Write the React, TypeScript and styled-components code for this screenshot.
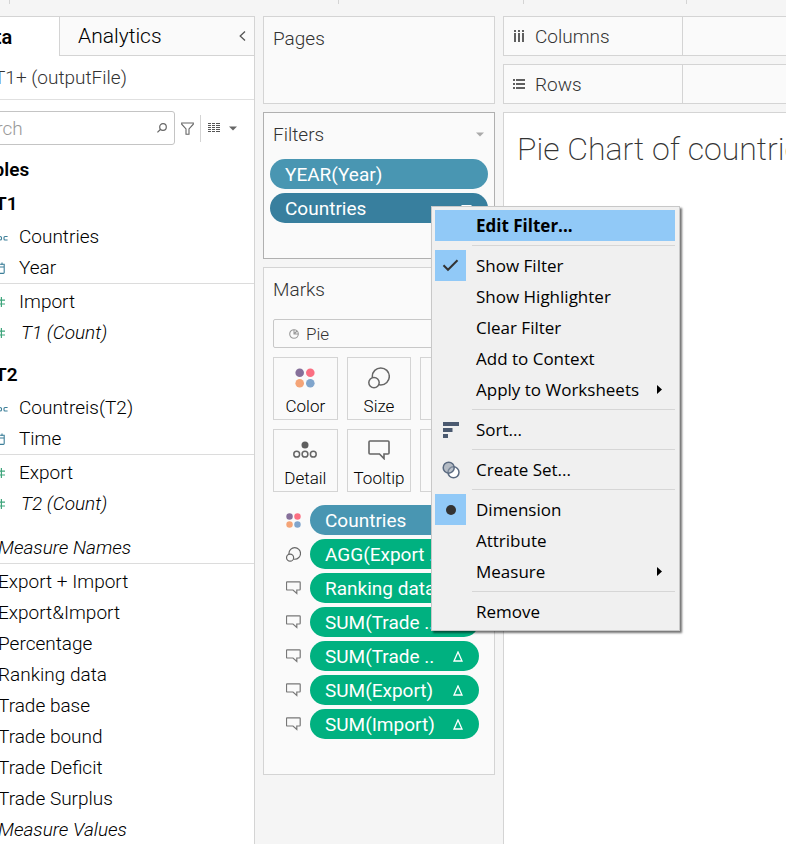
import React from "react";
import styled, { createGlobalStyle, css } from "styled-components";

const ui = `Roboto, "Liberation Sans", sans-serif`;
const menuFont = `"Open Sans", "Noto Sans", sans-serif`;

const line = "#d4d4d4";

const GlobalStyle = createGlobalStyle`
  * { box-sizing: border-box; }
  body {
    margin: 0;
    background: #f5f5f5;
    font-family: ${ui};
    font-weight: 300;
    font-size: 19px;
    color: #333;
    overflow: hidden;
  }
  button, input, select {
    font: inherit;
    color: inherit;
    margin: 0;
    padding: 0;
    border: 0;
    background: none;
    text-align: left;
  }
  h1, h2, h3, p, ul { margin: 0; padding: 0; font: inherit; list-style: none; }
`;

const Page = styled.div`
  display: flex;
  flex-direction: column;
  height: 100vh;
  overflow: hidden;
`;

const Toolbar = styled.header`
  display: flex;
  flex: none;
  height: 16px;
`;

const ToolGroup = styled.div<{ $width: number }>`
  width: ${(p) => p.$width}px;
  height: 4px;
  border-right: 1px solid ${line};
`;

const Workspace = styled.div`
  display: flex;
  flex: 1;
  min-height: 0;
  gap: 8px;
`;

/* ---------- data pane ---------- */

const DataPane = styled.aside`
  flex: none;
  width: 297px;
  margin-left: -42px;
  background: #fff;
  border: 1px solid ${line};
  border-bottom: 0;
  color: #000;
`;

const Tabs = styled.div`
  display: flex;
  height: 39px;
`;

const Tab = styled.button<{ $active?: boolean }>`
  font-size: 20px;
  ${(p) =>
    p.$active
      ? css`
          width: 100px;
          padding-left: 12px;
          font-weight: 600;
        `
      : css`
          flex: 1;
          display: flex;
          align-items: center;
          justify-content: space-between;
          padding: 0 8px 0 18px;
          background: #fafafa;
          border-left: 1px solid ${line};
          border-bottom: 1px solid ${line};
          font-size: 21px;
        `}
`;

const Source = styled.div`
  height: 44px;
  padding-left: 35px;
  line-height: 44px;
  color: #333;
  border-bottom: 1px solid #e0e0e0;
`;

const SearchRow = styled.div`
  display: flex;
  align-items: center;
  padding: 11px 17px 0 5px;
  margin-bottom: 8px;
  height: 45px;
`;

const SearchBox = styled.label`
  display: flex;
  align-items: center;
  flex: 1;
  min-width: 0;
  height: 34px;
  padding: 0 7px 0 0;
  border: 1px solid #c4c4c4;
  border-radius: 3px;
`;

const SearchInput = styled.input`
  flex: 1;
  width: 0;
  min-width: 0;
  outline: 0;
  &::placeholder {
    color: #999;
    opacity: 1;
  }
`;

const IconButton = styled.button`
  display: flex;
  flex: none;
  align-items: center;
  margin-left: 6px;
`;

const ViewButton = styled(IconButton)`
  height: 27px;
  gap: 9px;
  padding-left: 7px;
  border-left: 1px solid ${line};
`;

const Heading = styled.h2<{ $indent?: boolean }>`
  height: 34px;
  line-height: 34px;
  padding-left: ${(p) => (p.$indent ? 36 : 14)}px;
  font-weight: 600;
`;

const Group = styled.ul<{ $ruled?: boolean; $gap?: number }>`
  margin-bottom: ${(p) => p.$gap ?? 0}px;
  ${(p) =>
    p.$ruled &&
    css`
      margin-bottom: 2px;
      border-bottom: 1px solid #dcdcdc;
    `}
`;

const FieldButton = styled.button<{ $italic?: boolean; $flush?: boolean }>`
  display: flex;
  align-items: center;
  width: 100%;
  height: 31px;
  padding-left: ${(p) => (p.$flush ? 39 : 30)}px;
  font-style: ${(p) => (p.$italic ? "italic" : "normal")};
  white-space: nowrap;
`;

const FieldIcon = styled.span<{ $wide?: boolean }>`
  display: flex;
  width: ${(p) => (p.$wide ? 32 : 30)}px;
`;

/* ---------- shelves ---------- */

const Cards = styled.div`
  display: flex;
  flex-direction: column;
  flex: none;
  gap: 8px;
  width: 232px;
`;

const Card = styled.section<{ $height: number; $active?: boolean; $pad?: number }>`
  min-height: ${(p) => p.$height}px;
  padding: 0 ${(p) => p.$pad ?? 6}px;
  background: #fafafa;
  border: 1px solid ${(p) => (p.$active ? "#b0b0b0" : line)};
`;

const CardTitle = styled.h2<{ $inset: number }>`
  display: flex;
  align-items: center;
  justify-content: space-between;
  height: 42px;
  margin-bottom: 4px;
  padding: 0 4px 0 ${(p) => p.$inset}px;
`;

const Pills = styled.ul`
  display: flex;
  flex-direction: column;
  gap: 4px;
`;

const PillRow = styled.li`
  position: relative;
  display: flex;
  align-items: center;
`;

const PillIcon = styled.span`
  display: flex;
  width: 37px;
  padding-left: 13px;
`;

type PillTone = "blue" | "active" | "green";
const tones: Record<PillTone, string> = {
  blue: "#4996b2",
  active: "#387f9e",
  green: "#00b180",
};

const Pill = styled.button<{ $tone: PillTone }>`
  display: flex;
  align-items: center;
  justify-content: space-between;
  flex: 1;
  height: 30px;
  padding: 0 16px 0 15px;
  border-radius: 15px;
  background: ${(p) => tones[p.$tone]};
  color: #fff;
  font-weight: 400;
  white-space: nowrap;
`;

const MarkType = styled.label`
  display: flex;
  align-items: center;
  gap: 7px;
  height: 29px;
  margin: 9px 0;
  padding-left: 15px;
  border: 1px solid #c8c8c8;
  border-radius: 2px;
  font-size: 17px;
`;

const MarkSelect = styled.select`
  flex: 1;
  appearance: none;
  outline: 0;
`;

const MarkGrid = styled.div`
  display: grid;
  grid-template-columns: repeat(3, 1fr);
  gap: 9px;
  margin-bottom: 13px;
`;

const MarkButton = styled.button`
  display: flex;
  flex-direction: column;
  align-items: center;
  height: 63px;
  padding-top: 4px;
  border: 1px solid ${line};
  color: #000;
  font-size: 17px;
  line-height: 26px;
`;

const MarkIcon = styled.span`
  display: flex;
  align-items: center;
  height: 32px;
`;

const Encodings = styled.div`
  width: 206px;
`;

/* ---------- sheet ---------- */

const Main = styled.main`
  display: flex;
  flex-direction: column;
  flex: 1;
  min-width: 0;
  gap: 8px;
`;

const Shelf = styled.div`
  display: flex;
  flex: none;
  height: 40px;
  background: #fafafa;
  border: 1px solid ${line};
  border-right: 0;
`;

const ShelfLabel = styled.h2`
  display: flex;
  align-items: center;
  gap: 10px;
  width: 179px;
  padding-left: 9px;
  border-right: 1px solid ${line};
`;

const Sheet = styled.div`
  flex: 1;
  padding: 15px 0 0 13px;
  background: #fff;
  border: 1px solid ${line};
  border-width: 1px 0 0 1px;
  overflow: hidden;
`;

const SheetTitle = styled.h1`
  font-size: 32px;
  line-height: 42px;
  font-weight: 200;
  white-space: nowrap;
`;

/* ---------- context menu ---------- */

const Menu = styled.div`
  position: absolute;
  left: 161px;
  top: 13px;
  z-index: 2;
  width: 249px;
  padding: 3px 4px 3px 3px;
  background: #f0f0f0;
  border: 1px solid #c8c8c8;
  box-shadow: 2px 2px 2px rgba(0, 0, 0, 0.55);
  font-family: ${menuFont};
  font-weight: 400;
  font-size: 17px;
  color: #000;
`;

const MenuItem = styled.button<{ $hot?: boolean }>`
  display: flex;
  align-items: center;
  width: 100%;
  height: 31px;
  padding-right: 13px;
  background: ${(p) => (p.$hot ? "#91c9f7" : "transparent")};
  font-weight: ${(p) => (p.$hot ? 700 : 400)};
  white-space: nowrap;
`;

const MenuIcon = styled.span<{ $on?: boolean }>`
  display: flex;
  align-items: center;
  justify-content: center;
  width: 31px;
  height: 31px;
  margin-right: 10px;
  background: ${(p) => (p.$on ? "#91c9f7" : "transparent")};
`;

const MenuText = styled.span`
  flex: 1;
`;

const Separator = styled.hr`
  height: 1px;
  margin: 4px 0 4px 37px;
  border: 0;
  background: #d6d6d6;
`;

/* ---------- drawings ---------- */

const Caret = ({ color = "#666" }: { color?: string }) => (
  <svg width="8" height="5" viewBox="0 0 8 5">
    <path d="M0 0.5h8L4 4.5z" fill={color} />
  </svg>
);

const PillCaret = () => (
  <svg width="11" height="6" viewBox="0 0 11 6">
    <path d="M0 0h11L5.5 6z" fill="#fff" />
  </svg>
);

const Chevron = () => (
  <svg width="7" height="10" viewBox="0 0 7 10" fill="none" stroke="#555" strokeWidth="1.3">
    <path d="M6 0.5L1.2 5 6 9.5" />
  </svg>
);

const SearchIcon = () => (
  <svg width="10" height="10" viewBox="0 0 10 10" fill="none" stroke="#666" strokeWidth="1.2">
    <circle cx="6" cy="4" r="3.3" />
    <path d="M3.6 6.3L0.4 9.4" />
  </svg>
);

const FunnelIcon = () => (
  <svg width="13" height="13" viewBox="0 0 13 13" fill="none" stroke="#666" strokeWidth="1.1">
    <path d="M0.7 1h11.6v1.2L8 7v5.3H5V7L0.7 2.2z" />
  </svg>
);

const ListIcon = () => (
  <svg width="12" height="10" viewBox="0 0 12 10" stroke="#555" strokeWidth="1">
    {[0.5, 2.5, 4.5, 6.5, 8.5].map((y) => (
      <path key={y} d={`M0 ${y}h3M4 ${y}h3M8 ${y}h4`} />
    ))}
  </svg>
);

const AbcIcon = () => (
  <svg width="19" height="8" viewBox="0 0 19 8" fill="none" stroke="#3d7f99" strokeWidth="1.1">
    <circle cx="2.5" cy="5" r="2" />
    <path d="M4.8 3v4.4M7.5 0v7.400M9.500 3.500h1.500q1.500 0 1.500 1v1.500q0 1-1.500 1h-1.500" />
    <path d="M18.600 3.500h-2.600q-1 0-1 1v1.500q0 1 1 1h2.600" />
  </svg>
);

const CalendarIcon = () => (
  <svg width="16" height="12" viewBox="0 0 16 12" fill="none" stroke="#3d7f99" strokeWidth="1.1">
    <path d="M6 2.2h9.2v8.4q0 .8-.8.8H6zM6 5h9.2M8 .5v2.5M13 .5v2.5" />
  </svg>
);

const HashIcon = () => (
  <svg width="16" height="12" viewBox="0 0 16 12" fill="none" stroke="#3fa57c" strokeWidth="1.2">
    <path d="M5 4.2h11M5 8h11M8 1v10M12.4 1v10" />
  </svg>
);

const ColorIcon = ({ size = 20 }: { size?: number }) => (
  <svg width={size} height={size} viewBox="0 0 20 20">
    <circle cx="4.7" cy="4.7" r="4.3" fill="#86709a" />
    <circle cx="15.3" cy="4.7" r="4.3" fill="#fb6f82" />
    <circle cx="4.7" cy="15.3" r="4.3" fill="#f4a477" />
    <circle cx="15.3" cy="15.3" r="4.3" fill="#80a5cc" />
  </svg>
);

const SizeIcon = ({ size = 22, stroke = 1.5 }: { size?: number; stroke?: number }) => (
  <svg width={size} height={size} viewBox="0 0 22 22" fill="none" stroke="#666" strokeWidth={stroke}>
    <circle cx="12.8" cy="9.4" r="8.5" />
    <circle cx="6" cy="15.6" r="5.2" fill="#fafafa" />
  </svg>
);

const DetailIcon = () => (
  <svg width="24" height="18" viewBox="0 0 24 18" fill="none" stroke="#666" strokeWidth="1.5">
    <circle cx="12" cy="4" r="3.5" fill="#5f5f5f" stroke="none" />
    <circle cx="3.7" cy="13.2" r="2.9" />
    <circle cx="12" cy="13.2" r="2.9" />
    <circle cx="20.3" cy="13.2" r="2.9" />
  </svg>
);

const TooltipIcon = () => (
  <svg width="22" height="20" viewBox="0 0 22 20" fill="none" stroke="#666" strokeWidth="1.6">
    <path d="M2 1h18q1 0 1 1v11q0 1-1 1h-4v4.6L11.5 14H2q-1 0-1-1V2q0-1 1-1z" />
  </svg>
);

const TooltipSmall = () => (
  <svg width="15" height="14" viewBox="0 0 15 14" fill="none" stroke="#777" strokeWidth="1.2">
    <path d="M1.2.8h12.3q.7 0 .7.7v6.8q0 .7-.7.7h-2.7v3.5L7 9H1.2q-.7 0-.7-.7V1.5q0-.7.7-.7z" />
  </svg>
);

const PieIcon = () => (
  <svg width="10" height="10" viewBox="0 0 10 10" fill="none" stroke="#999" strokeWidth="1.1">
    <circle cx="5" cy="5" r="4.3" />
    <path d="M5 .7V5h4.300M5 5L8 2" />
  </svg>
);

const DeltaIcon = () => (
  <svg width="10" height="11" viewBox="0 0 10 11" fill="none" stroke="#fff" strokeWidth="1.3">
    <path d="M1 10L5 1l4 9z" />
  </svg>
);

const ColumnsIcon = () => (
  <svg width="12" height="12" viewBox="0 0 12 12" fill="#5f5f5f">
    {[1, 5, 9].map((x) => (
      <path key={x} d={`M${x} 0h2v2h-2zM${x} 3h2v9h-2z`} />
    ))}
  </svg>
);

const RowsIcon = () => (
  <svg width="12" height="10" viewBox="0 0 12 10" fill="#5f5f5f">
    {[0, 4, 8].map((y) => (
      <path key={y} d={`M0 ${y}h2v2h-2zM3 ${y}h9v2h-9z`} />
    ))}
  </svg>
);

const CheckIcon = () => (
  <svg width="17" height="13" viewBox="0 0 17 13" fill="none" stroke="#333" strokeWidth="2">
    <path d="M1.5 6.2L6 10.8 15.5 1.2" />
  </svg>
);

const DotIcon = () => (
  <svg width="10" height="10" viewBox="0 0 10 10">
    <circle cx="5" cy="5" r="5" fill="#333" />
  </svg>
);

const SortIcon = () => (
  <svg width="16" height="16" viewBox="0 0 16 16" fill="#4b5a70">
    <path d="M0 0h16v4H0zM0 6h9.5v4H0zM0 12h5v4H0z" />
  </svg>
);

const SetIcon = () => (
  <svg width="18" height="18" viewBox="0 0 18 18" stroke="#5a6a80" strokeWidth="1.5">
    <circle cx="11.5" cy="11.3" r="5.5" fill="#fff" />
    <circle cx="6.7" cy="6.7" r="5.5" fill="#8d99a8" fillOpacity="0.6" />
  </svg>
);

const Arrow = () => (
  <svg width="5" height="9" viewBox="0 0 5 9">
    <path d="M0 0l5 4.5L0 9z" fill="#000" />
  </svg>
);

/* ---------- content ---------- */

type FieldKind = "text" | "date" | "number" | "plain";
interface FieldProps {
  name: string;
  kind?: FieldKind;
  italic?: boolean;
}

const fieldIcons = { text: AbcIcon, date: CalendarIcon, number: HashIcon };

const Field = ({ name, kind = "plain", italic }: FieldProps) => {
  const Icon = kind === "plain" ? null : fieldIcons[kind];
  return (
    <li>
      <FieldButton $italic={italic} $flush={!Icon}>
        {Icon && (
          <FieldIcon $wide={italic}>
            <Icon />
          </FieldIcon>
        )}
        {name}
      </FieldButton>
    </li>
  );
};

const calculated = [
  "Export + Import",
  "Export&Import",
  "Percentage",
  "Ranking data",
  "Trade base",
  "Trade bound",
  "Trade Deficit",
  "Trade Surplus",
];

const encodings: { icon: React.ReactNode; label: string; tone: PillTone; delta?: boolean }[] = [
  { icon: <ColorIcon size={15} />, label: "Countries", tone: "blue" },
  { icon: <SizeIcon size={15} stroke={1.7} />, label: "AGG(Export ..", tone: "green" },
  { icon: <TooltipSmall />, label: "Ranking data", tone: "green" },
  { icon: <TooltipSmall />, label: "SUM(Trade ..", tone: "green", delta: true },
  { icon: <TooltipSmall />, label: "SUM(Trade ..", tone: "green", delta: true },
  { icon: <TooltipSmall />, label: "SUM(Export)", tone: "green", delta: true },
  { icon: <TooltipSmall />, label: "SUM(Import)", tone: "green", delta: true },
];

const marks = [
  { label: "Color", icon: <ColorIcon /> },
  { label: "Size", icon: <SizeIcon /> },
  { label: "" },
  { label: "Detail", icon: <DetailIcon /> },
  { label: "Tooltip", icon: <TooltipIcon /> },
  { label: "" },
];

type Entry = { label: string; icon?: React.ReactNode; on?: boolean; hot?: boolean; more?: boolean };
const menuGroups: Entry[][] = [
  [{ label: "Edit Filter...", hot: true }],
  [
    { label: "Show Filter", icon: <CheckIcon />, on: true },
    { label: "Show Highlighter" },
    { label: "Clear Filter" },
    { label: "Add to Context" },
    { label: "Apply to Worksheets", more: true },
  ],
  [{ label: "Sort...", icon: <SortIcon /> }],
  [{ label: "Create Set...", icon: <SetIcon /> }],
  [
    { label: "Dimension", icon: <DotIcon />, on: true },
    { label: "Attribute" },
    { label: "Measure", more: true },
  ],
  [{ label: "Remove" }],
];

const ContextMenu = () => (
  <Menu role="menu" aria-label="Countries">
    {menuGroups.map((group, i) => (
      <React.Fragment key={i}>
        {i > 0 && <Separator />}
        {group.map((item) => (
          <MenuItem key={item.label} role="menuitem" $hot={item.hot}>
            <MenuIcon $on={item.on}>{item.icon}</MenuIcon>
            <MenuText>{item.label}</MenuText>
            {item.more && <Arrow />}
          </MenuItem>
        ))}
      </React.Fragment>
    ))}
  </Menu>
);

export default function App() {
  return (
    <Page>
      <GlobalStyle />
      <Toolbar>
        <ToolGroup $width={10} />
        <ToolGroup $width={329} />
        <ToolGroup $width={185} />
        <ToolGroup $width={163} />
      </Toolbar>
      <Workspace>
        <DataPane>
          <Tabs role="tablist">
            <Tab role="tab" aria-selected $active>
              Data
            </Tab>
            <Tab role="tab" aria-selected={false}>
              Analytics
              <Chevron />
            </Tab>
          </Tabs>
          <Source>T1+ (outputFile)</Source>
          <SearchRow>
            <SearchBox>
              <SearchInput type="text" placeholder="Search" aria-label="Search" />
              <SearchIcon />
            </SearchBox>
            <IconButton aria-label="Filter fields">
              <FunnelIcon />
            </IconButton>
            <ViewButton aria-label="View options">
              <ListIcon />
              <Caret />
            </ViewButton>
          </SearchRow>
          <Heading>Tables</Heading>
          <Heading $indent>T1</Heading>
          <Group $ruled>
            <Field name="Countries" kind="text" />
            <Field name="Year" kind="date" />
          </Group>
          <Group $gap={10}>
            <Field name="Import" kind="number" />
            <Field name="T1 (Count)" kind="number" italic />
          </Group>
          <Heading $indent>T2</Heading>
          <Group $ruled>
            <Field name="Countreis(T2)" kind="text" />
            <Field name="Time" kind="date" />
          </Group>
          <Group $gap={13}>
            <Field name="Export" kind="number" />
            <Field name="T2 (Count)" kind="number" italic />
          </Group>
          <Group $ruled>
            <Field name="Measure Names" italic />
          </Group>
          <Group>
            {calculated.map((name) => (
              <Field key={name} name={name} />
            ))}
            <Field name="Measure Values" italic />
          </Group>
        </DataPane>

        <Cards>
          <Card $height={88}>
            <CardTitle $inset={3}>Pages</CardTitle>
          </Card>
          <Card $height={147} $active>
            <CardTitle $inset={3}>
              Filters
              <Caret color="#aaa" />
            </CardTitle>
            <Pills>
              <PillRow>
                <Pill $tone="blue">YEAR(Year)</Pill>
              </PillRow>
              <PillRow>
                <Pill $tone="active">
                  Countries
                  <PillCaret />
                </Pill>
                <ContextMenu />
              </PillRow>
            </Pills>
          </Card>
          <Card $height={508} $pad={9}>
            <CardTitle $inset={0}>Marks</CardTitle>
            <MarkType>
              <PieIcon />
              <MarkSelect aria-label="Mark type" defaultValue="Pie">
                <option>Pie</option>
              </MarkSelect>
            </MarkType>
            <MarkGrid>
              {marks.map((mark, i) => (
                <MarkButton key={i}>
                  <MarkIcon>{mark.icon}</MarkIcon>
                  {mark.label}
                </MarkButton>
              ))}
            </MarkGrid>
            <Encodings>
              <Pills>
                {encodings.map((item, i) => (
                  <PillRow key={i}>
                    <PillIcon>{item.icon}</PillIcon>
                    <Pill $tone={item.tone}>
                      {item.label}
                      {item.delta && <DeltaIcon />}
                    </Pill>
                  </PillRow>
                ))}
              </Pills>
            </Encodings>
          </Card>
        </Cards>

        <Main>
          <Shelf>
            <ShelfLabel>
              <ColumnsIcon />
              Columns
            </ShelfLabel>
          </Shelf>
          <Shelf>
            <ShelfLabel>
              <RowsIcon />
              Rows
            </ShelfLabel>
          </Shelf>
          <Sheet>
            <SheetTitle>Pie Chart of countries</SheetTitle>
          </Sheet>
        </Main>
      </Workspace>
    </Page>
  );
}
